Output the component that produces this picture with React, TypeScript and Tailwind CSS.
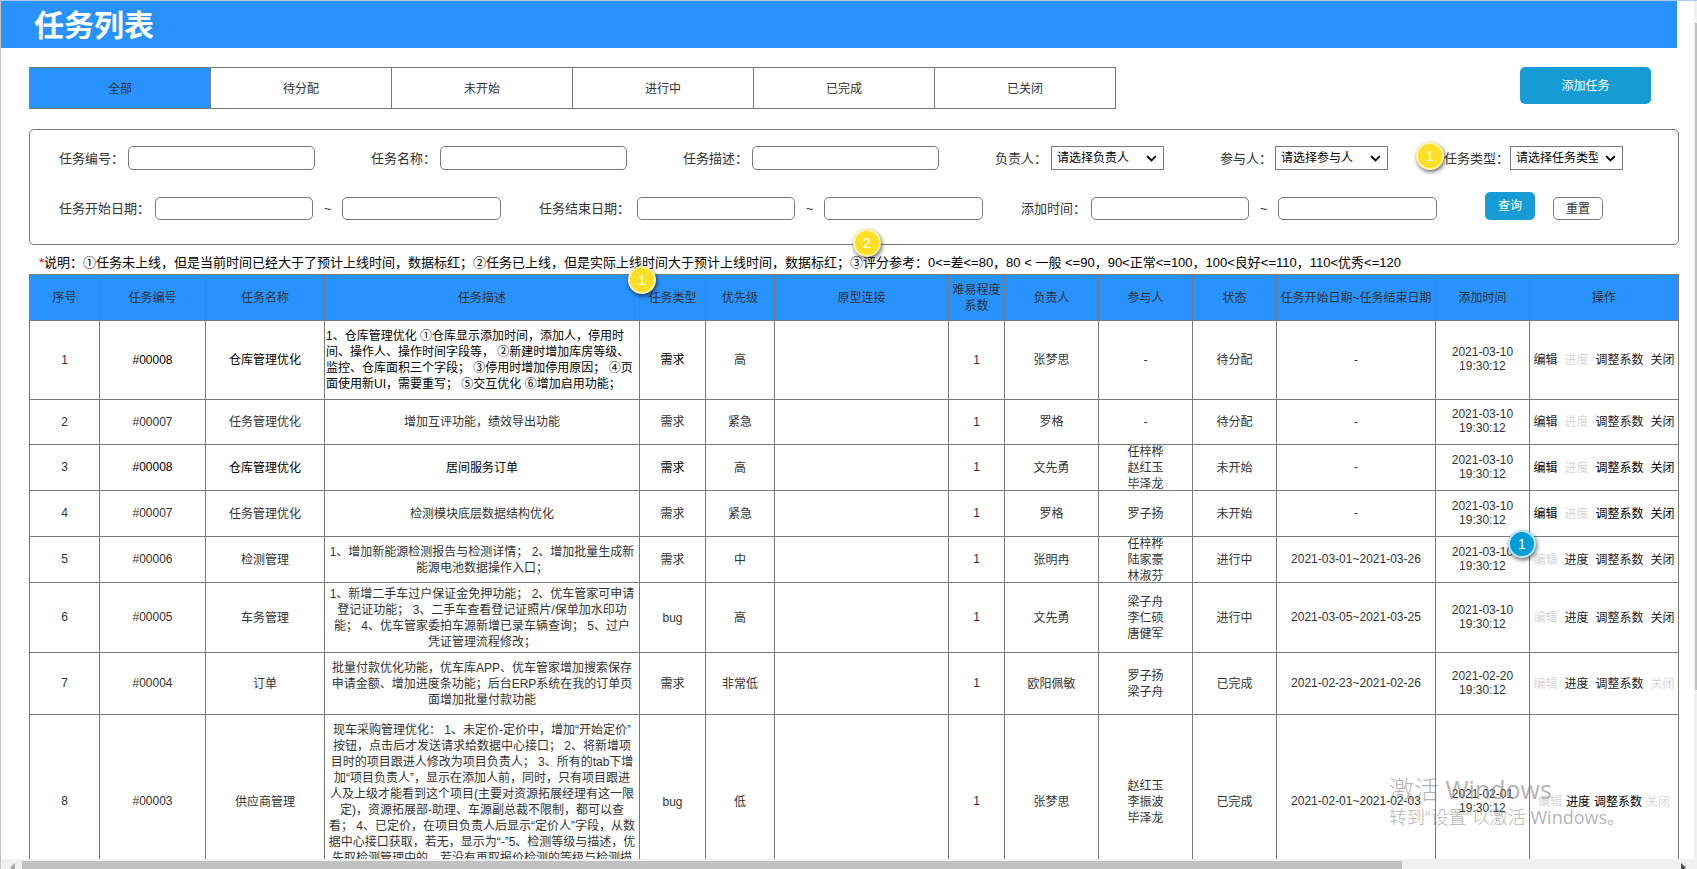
import React from "react";

const TABS = ["全部", "待分配", "未开始", "进行中", "已完成", "已关闭"];

const COLUMNS: { title: string; width: number }[] = [
  { title: "序号", width: 70 },
  { title: "任务编号", width: 106 },
  { title: "任务名称", width: 119 },
  { title: "任务描述", width: 315 },
  { title: "任务类型", width: 66 },
  { title: "优先级", width: 69 },
  { title: "原型连接", width: 174 },
  { title: "难易程度系数", width: 56 },
  { title: "负责人", width: 94 },
  { title: "参与人", width: 94 },
  { title: "状态", width: 84 },
  { title: "任务开始日期~任务结束日期", width: 159 },
  { title: "添加时间", width: 94 },
  { title: "操作", width: 149 },
];

const TOTAL = COLUMNS.reduce((sum, c) => sum + c.width, 0);

type Task = {
  height: string;
  code: string;
  name: string;
  desc: string[];
  kind: string;
  priority: string;
  owner: string;
  members: string[];
  status: string;
  range: string;
  date: string;
  edit: boolean;
  progress: boolean;
  close: boolean;
  late?: boolean;
  left?: boolean;
  long?: boolean;
  strongActions?: boolean;
};

const TASKS: Task[] = [
  {
    height: "h-[79px]", code: "#00008", name: "仓库管理优化",
    desc: [
      "1、仓库管理优化 ①仓库显示添加时间，添加人，停用时",
      "间、操作人、操作时间字段等， ②新建时增加库房等级、",
      "监控、仓库面积三个字段； ③停用时增加停用原因； ④页",
      "面使用新UI，需要重写； ⑤交互优化 ⑥增加启用功能；",
    ],
    kind: "需求", priority: "高", owner: "张梦思", members: ["-"], status: "待分配", range: "-",
    date: "2021-03-10", edit: true, progress: false, close: true, late: true, left: true,
  },
  {
    height: "h-[45px]", code: "#00007", name: "任务管理优化", desc: ["增加互评功能，绩效导出功能"],
    kind: "需求", priority: "紧急", owner: "罗格", members: ["-"], status: "待分配", range: "-",
    date: "2021-03-10", edit: true, progress: false, close: true,
  },
  {
    height: "h-[46px]", code: "#00008", name: "仓库管理优化", desc: ["居间服务订单"],
    kind: "需求", priority: "高", owner: "文先勇", members: ["任梓桦", "赵红玉", "毕泽龙"], status: "未开始", range: "-",
    date: "2021-03-10", edit: true, progress: false, close: true, late: true, strongActions: true,
  },
  {
    height: "h-[46px]", code: "#00007", name: "任务管理优化", desc: ["检测模块底层数据结构优化"],
    kind: "需求", priority: "紧急", owner: "罗格", members: ["罗子扬"], status: "未开始", range: "-",
    date: "2021-03-10", edit: true, progress: false, close: true, strongActions: true,
  },
  {
    height: "h-[46px]", code: "#00006", name: "检测管理",
    desc: ["1、增加新能源检测报告与检测详情； 2、增加批量生成新", "能源电池数据操作入口；"],
    kind: "需求", priority: "中", owner: "张明冉", members: ["任梓桦", "陆家豪", "林淑芬"], status: "进行中",
    range: "2021-03-01~2021-03-26", date: "2021-03-10", edit: false, progress: true, close: true,
  },
  {
    height: "h-[70px]", code: "#00005", name: "车务管理",
    desc: [
      "1、新增二手车过户保证金免押功能； 2、优车管家可申请",
      "登记证功能； 3、二手车查看登记证照片/保单加水印功",
      "能； 4、优车管家委拍车源新增已录车辆查询； 5、过户",
      "凭证管理流程修改；",
    ],
    kind: "bug", priority: "高", owner: "文先勇", members: ["梁子舟", "李仁硕", "唐健军"], status: "进行中",
    range: "2021-03-05~2021-03-25", date: "2021-03-10", edit: false, progress: true, close: true,
  },
  {
    height: "h-[62px]", code: "#00004", name: "订单",
    desc: [
      "批量付款优化功能，优车库APP、优车管家增加搜索保存",
      "申请金额、增加进度条功能；后台ERP系统在我的订单页",
      "面增加批量付款功能",
    ],
    kind: "需求", priority: "非常低", owner: "欧阳佩敏", members: ["罗子扬", "梁子舟"], status: "已完成",
    range: "2021-02-23~2021-02-26", date: "2021-02-20", edit: false, progress: true, close: false,
  },
  {
    height: "h-[174px]", code: "#00003", name: "供应商管理",
    desc: [
      "现车采购管理优化： 1、未定价-定价中，增加“开始定价”",
      "按钮，点击后才发送请求给数据中心接口； 2、将新增项",
      "目时的项目跟进人修改为项目负责人； 3、所有的tab下增",
      "加“项目负责人”，显示在添加人前，同时，只有项目跟进",
      "人及上级才能看到这个项目(主要对资源拓展经理有这一限",
      "定)，资源拓展部-助理、车源副总裁不限制，都可以查",
      "看； 4、已定价，在项目负责人后显示“定价人”字段，从数",
      "据中心接口获取，若无，显示为“-”5、检测等级与描述，优",
      "先取检测管理中的，若没有再取报价检测的等级与检测描",
    ],
    kind: "bug", priority: "低", owner: "张梦思", members: ["赵红玉", "李振波", "毕泽龙"], status: "已完成",
    range: "2021-02-01~2021-02-03", date: "2021-02-01", edit: false, progress: true, close: false,
    long: true, strongActions: true,
  },
];

function Lines({ items }: { items: string[] }) {
  return (
    <>
      {items.map((line, i) => (
        <span key={i} className="block whitespace-nowrap">{line}</span>
      ))}
    </>
  );
}

function Marker({ n, className }: { n: number; className: string }) {
  return (
    <span
      className={`absolute z-10 flex size-7 items-center justify-center rounded-full border-2 text-sm text-white shadow-[1px_2px_4px_rgba(0,0,0,0.6)] ${className}`}
    >
      {n}
    </span>
  );
}

function TextField({ id, label, className }: { id: string; label: string; className: string }) {
  return (
    <div className={`flex items-center ${className}`}>
      <label htmlFor={id} className="w-[69px] shrink-0 pt-0.5">{label}</label>
      <input id={id} type="text" className="h-6 w-[187px] rounded-[5px] border border-[#797979] bg-white px-2 outline-none" />
    </div>
  );
}

function SelectField({ id, label, option, labelWidth, className, children }: {
  id: string; label: string; option: string; labelWidth: string; className: string; children?: React.ReactNode;
}) {
  return (
    <div className={`relative flex items-center ${className}`}>
      {children}
      <label htmlFor={id} className={`shrink-0 pt-0.5 ${labelWidth}`}>{label}</label>
      <div className="relative">
        <select id={id} className="block h-6 w-[113px] appearance-none overflow-hidden border border-[#797979] bg-white pr-6 pl-[5px] text-xs text-black outline-none">
          <option>{option}</option>
        </select>
        <svg viewBox="0 0 12 8" className="pointer-events-none absolute top-[9px] right-[7px] h-[7px] w-[11px]" fill="none" stroke="#000" strokeWidth="2">
          <path d="M1 1.2 6 6.2 11 1.2" />
        </svg>
      </div>
    </div>
  );
}

function DateRange({ id, label, labelWidth, className }: { id: string; label: string; labelWidth: string; className: string }) {
  return (
    <div className={`flex items-center ${className}`}>
      <label htmlFor={id} className={`shrink-0 pt-px ${labelWidth}`}>{label}</label>
      <input id={id} type="text" className="h-[23px] w-[158px] rounded-[5px] border border-[#797979] bg-white px-2 outline-none" />
      <span className="w-[29px] text-center">~</span>
      <input type="text" aria-label={`${label}至`} className="h-[23px] w-[159px] rounded-[5px] border border-[#797979] bg-white px-2 outline-none" />
    </div>
  );
}

function Action({ on, strong, children }: { on: boolean; strong?: boolean; children: string }) {
  return (
    <button type="button" disabled={!on} className={on ? (strong ? "text-black" : "text-[#222]") : "text-[#d7d7d7]"}>
      {children}
    </button>
  );
}

function TaskRow({ task, index }: { task: Task; index: number }) {
  const cell = "border border-[#797979] p-0";
  const latin = `${cell} pb-px`;
  const tone = task.late ? "text-black" : "";
  return (
    <tr className={task.height}>
      <td className={latin}>{index}</td>
      <td className={`${latin} ${tone}`}>{task.code}</td>
      <td className={`${cell} ${tone}`}>{task.name}</td>
      <td className={`${cell} ${tone} ${task.left ? "pl-px text-left" : ""} ${task.long ? "pt-[7px] align-top" : ""}`}>
        <Lines items={task.desc} />
      </td>
      <td className={`${cell} ${tone}`}>{task.kind}</td>
      <td className={cell}>{task.priority}</td>
      <td className={cell} />
      <td className={latin}>1</td>
      <td className={cell}>{task.owner}</td>
      <td className={cell}>
        <div className="-my-1"><Lines items={task.members} /></div>
      </td>
      <td className={cell}>{task.status}</td>
      <td className={latin}>{task.range}</td>
      <td className={`${cell} pb-0.5 leading-[14px]`}><Lines items={[task.date, "19:30:12"]} /></td>
      <td className={cell}>
        <div className={`flex justify-center whitespace-nowrap ${task.long ? "gap-1" : "gap-[7px]"}`}>
          <Action on={task.edit} strong={task.strongActions}>编辑</Action>
          <Action on={task.progress} strong={task.strongActions}>进度</Action>
          <Action on strong={task.strongActions}>调整系数</Action>
          <Action on={task.close} strong={task.strongActions}>关闭</Action>
        </div>
      </td>
    </tr>
  );
}

export default function App() {
  return (
    <div className="relative flex h-screen flex-col overflow-hidden border-t border-l border-t-[#a9cdf0] border-l-[#c4c4c4] bg-white font-['Liberation_Sans','Noto_Sans_CJK_SC',sans-serif] text-xs text-[#333]">
      <main className="min-h-0 flex-1 overflow-hidden">
        <header className="mr-5 flex h-[47px] items-center bg-[#2892ff] pt-[3px] pl-[33px]">
          <h1 className="text-3xl font-bold text-white">任务列表</h1>
        </header>

        <div className="mr-[18px] ml-7">
          <div className="mt-[19px] flex items-start justify-between">
            <nav className="flex h-[42px] border border-[#797979]">
              {TABS.map((tab, i) => (
                <button
                  key={tab}
                  type="button"
                  className={`border-[#797979] pt-0.5 ${i === 0 ? "w-[180px] bg-[#2892ff]" : "w-[181px] border-l bg-white"}`}
                >
                  {tab}
                </button>
              ))}
            </nav>
            <button type="button" className="mr-7 h-[37px] w-[131px] rounded-[5px] bg-[#169bd5] text-white">添加任务</button>
          </div>

          <form className="relative mt-5 h-[116px] rounded-[5px] border border-[#797979] pt-4 pl-[29px] text-[13px]">
            <div className="flex">
              <TextField id="code" label="任务编号：" className="" />
              <TextField id="name" label="任务名称：" className="ml-14" />
              <TextField id="desc" label="任务描述：" className="ml-14" />
              <SelectField id="owner" label="负责人：" option="请选择负责人" labelWidth="w-[56px]" className="ml-14" />
              <SelectField id="member" label="参与人：" option="请选择参与人" labelWidth="w-[55px]" className="ml-14" />
              <SelectField id="kind" label="任务类型：" option="请选择任务类型" labelWidth="w-[66px]" className="ml-14">
                <Marker n={1} className="top-[-4px] left-[-28px] border-[#fdf3a5] bg-[#ffdf25]" />
              </SelectField>
            </div>
            <div className="mt-[22px] flex items-end">
              <DateRange id="start" label="任务开始日期：" labelWidth="w-24" className="" />
              <DateRange id="end" label="任务结束日期：" labelWidth="w-[98px]" className="ml-[38px]" />
              <DateRange id="added" label="添加时间：" labelWidth="w-[70px]" className="ml-[38px]" />
              <button type="button" className="ml-12 h-7 w-[50px] rounded-[5px] bg-[#169bd5] text-xs text-white">查询</button>
              <button type="reset" className="ml-[18px] h-[23px] w-[50px] rounded-[5px] border border-[#797979] bg-white text-xs">重置</button>
            </div>
            <Marker n={2} className="bottom-[-13px] left-[823px] border-[#fdf3a5] bg-[#ffdf25]" />
          </form>

          <p className="flex h-[29px] items-center pt-1.5 pl-2.5 text-[13px] whitespace-pre text-black">
            <span className="text-[#d9001b]">*</span>
            说明：①任务未上线，但是当前时间已经大于了预计上线时间，数据标红；②任务已上线，但是实际上线时间大于预计上线时间，数据标红；③评分参考：0&lt;=差&lt;=80，80 &lt; 一般 &lt;=90，90&lt;正常&lt;=100，100&lt;良好&lt;=110，110&lt;优秀&lt;=120
          </p>

          <div className="relative">
            <table className="w-full table-fixed border-collapse text-center leading-4">
              <colgroup>
                {COLUMNS.map((c) => (
                  <col key={c.title} style={{ width: `${(c.width / TOTAL) * 100}%` }} />
                ))}
              </colgroup>
              <thead>
                <tr className="h-[46px] bg-[#2892ff]">
                  {COLUMNS.map((c) => (
                    <th key={c.title} className="border border-[#797979] p-0 font-normal">{c.title}</th>
                  ))}
                </tr>
              </thead>
              <tbody>
                {TASKS.map((task, i) => (
                  <TaskRow key={i} task={task} index={i + 1} />
                ))}
              </tbody>
            </table>
            <Marker n={1} className="top-[-8px] left-[599px] border-[#fdf3a5] bg-[#ffdf25]" />
            <Marker n={1} className="top-[256px] left-[1479px] border-[#b9e6f7] bg-[#009dd9]" />
          </div>
        </div>
      </main>

      <div className="relative h-[10px] shrink-0 overflow-hidden bg-[#f1f1f1]">
        <div className="mt-0.5 mr-[295px] ml-[21px] h-2 bg-[#c1c1c1]" />
        <svg viewBox="0 0 5 8" className="absolute top-1 left-[9px] h-2 w-[5px]" fill="#a3a3a3"><path d="M5 0v8L0 4.5z" /></svg>
        <svg viewBox="0 0 5 8" className="absolute top-1 right-[11px] h-2 w-[5px]" fill="#505050"><path d="M0 0v8L5 4.5z" /></svg>
      </div>

      <div className="absolute top-0 right-0 bottom-0 w-[3px] bg-[#f1f1f1] pt-[22px]">
        <div className="ml-px h-[667px] bg-[#c1c1c1]" />
      </div>

      <div className="pointer-events-none absolute right-[72px] bottom-10 w-[236px] font-['Open_Sans','Noto_Sans_CJK_SC',sans-serif] font-light whitespace-nowrap text-[#808080]/60">
        <p className="text-[25px] leading-8">激活 <span className="font-normal">Windows</span></p>
        <p className="text-lg leading-6">转到“设置”以激活 <span className="font-normal">Windows。</span></p>
      </div>
    </div>
  );
}
